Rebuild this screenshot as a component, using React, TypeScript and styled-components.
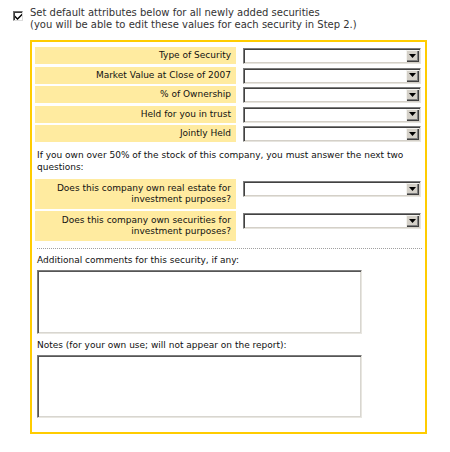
import React from 'react';
import styled, { createGlobalStyle } from 'styled-components';

const GlobalStyle = createGlobalStyle`
  body {
    margin: 0;
    background: #ffffff;
    font-family: "DejaVu Sans", Verdana, sans-serif;
  }
`;

const basicRows = [
  'Type of Security',
  'Market Value at Close of 2007',
  '% of Ownership',
  'Held for you in trust',
  'Jointly Held',
];

const companyRows = [
  'Does this company own real estate for investment purposes?',
  'Does this company own securities for investment purposes?',
];

function FakeSelect() {
  return (
    <SelectBox>
      <SelectValue />
      <ArrowButton>
        <svg width="7" height="4" viewBox="0 0 7 4">
          <path d="M0 0h7L3.5 4z" fill="#000" />
        </svg>
      </ArrowButton>
    </SelectBox>
  );
}

function App() {
  return (
    <Page>
      <GlobalStyle />
      <Header>
        <CheckBox>
          <svg width="7" height="7" viewBox="0 0 7 7">
            <path d="M0 2.5l2.5 2.5L7 0.5v2L2.5 7 0 4.5z" fill="#000" />
          </svg>
        </CheckBox>
        <HeaderText>
          Set default attributes below for all newly added securities
          <br />
          (you will be able to edit these values for each security in Step 2.)
        </HeaderText>
      </Header>

      <Panel>
        <FieldGrid>
          {basicRows.map((label) => (
            <React.Fragment key={label}>
              <Label>{label}</Label>
              <SelectCell>
                <FakeSelect />
              </SelectCell>
            </React.Fragment>
          ))}
        </FieldGrid>

        <Note>
          If you own over 50% of the stock of this company, you must answer the next two questions:
        </Note>

        <FieldGrid $tall>
          {companyRows.map((label) => (
            <React.Fragment key={label}>
              <Label $tall>{label}</Label>
              <SelectCell $tall>
                <FakeSelect />
              </SelectCell>
            </React.Fragment>
          ))}
        </FieldGrid>

        <Divider />

        <FieldCaption>Additional comments for this security, if any:</FieldCaption>
        <TextBox />

        <FieldCaption>Notes (for your own use; will not appear on the report):</FieldCaption>
        <TextBox />
      </Panel>
    </Page>
  );
}

export default App;

const Page = styled.div`
  width: 450px;
  height: 452px;
  overflow: hidden;
`;

const Header = styled.div`
  display: flex;
  align-items: flex-start;
  padding: 7px 0 0 13px;
`;

const CheckBox = styled.span`
  box-sizing: border-box;
  width: 10px;
  height: 10px;
  margin-top: 4px;
  margin-right: 7px;
  background: #ffffff;
  border: 1px solid;
  border-color: #6e6e6e #dcdcdc #dcdcdc #6e6e6e;
  box-shadow: inset 1px 1px 0 #3a3a3a;
  display: flex;
  align-items: center;
  justify-content: center;
  padding: 1px 0 0 1px;
`;

const HeaderText = styled.div`
  font-size: 10px;
  line-height: 12px;
  color: #333333;
`;

const Panel = styled.div`
  box-sizing: border-box;
  width: 397px;
  height: 394px;
  margin: 9px 0 0 30px;
  border: 2px solid #ffcc00;
  padding: 5px 4px 14px 3px;
  display: flex;
  flex-direction: column;
  font-size: 9px;
  color: #111111;
`;

const FieldGrid = styled.div<{ $tall?: boolean }>`
  display: grid;
  grid-template-columns: 201px 178px;
  column-gap: 7px;
  row-gap: ${(p) => (p.$tall ? '2px' : '2.5px')};
  margin-top: ${(p) => (p.$tall ? '6px' : '0')};
`;

const Label = styled.div<{ $tall?: boolean }>`
  background: #ffeba0;
  text-align: right;
  min-height: 17px;
  line-height: ${(p) => (p.$tall ? '11px' : '17px')};
  padding: ${(p) => (p.$tall ? '4px 5px 4px 1px' : '0 5px')};
`;

const SelectCell = styled.div<{ $tall?: boolean }>`
  padding-top: ${(p) => (p.$tall ? '2px' : '1px')};
`;

const SelectBox = styled.div`
  box-sizing: border-box;
  display: flex;
  width: 178px;
  height: 16px;
  background: #ffffff;
  border: 1px solid;
  border-color: #7c7c7c #e6e4de #e6e4de #7c7c7c;
  box-shadow: inset 1px 1px 0 #424242, inset -1px -1px 0 #d4d0c8;
  padding: 1px 1px 1px 1px;
`;

const SelectValue = styled.div`
  flex: 1;
`;

const ArrowButton = styled.div`
  box-sizing: border-box;
  width: 13px;
  height: 12px;
  background: #d4d0c8;
  box-shadow: inset 1px 1px 0 #f4f3ef, inset -1px -1px 0 #404040, inset -2px -2px 0 #808080;
  display: flex;
  align-items: center;
  justify-content: center;
  padding: 0 1px 1px 0;
`;

const Note = styled.p`
  margin: 8px 0 0;
  padding: 0 0 0 2px;
  line-height: 11.5px;
`;

const Divider = styled.div`
  margin: 7px 0 0 2px;
  width: 385px;
  border-top: 1px dotted #a0a0a0;
`;

const FieldCaption = styled.div`
  margin: 5px 0 0 2px;
  line-height: 12px;
`;

const TextBox = styled.div`
  box-sizing: border-box;
  width: 325px;
  height: 64px;
  margin: 4px 0 0 2px;
  background: #ffffff;
  border: 1px solid;
  border-color: #7c7c7c #e8e6e0 #e8e6e0 #7c7c7c;
  box-shadow: inset 1px 1px 0 #555555, inset -1px -1px 0 #d8d6d0;
`;
